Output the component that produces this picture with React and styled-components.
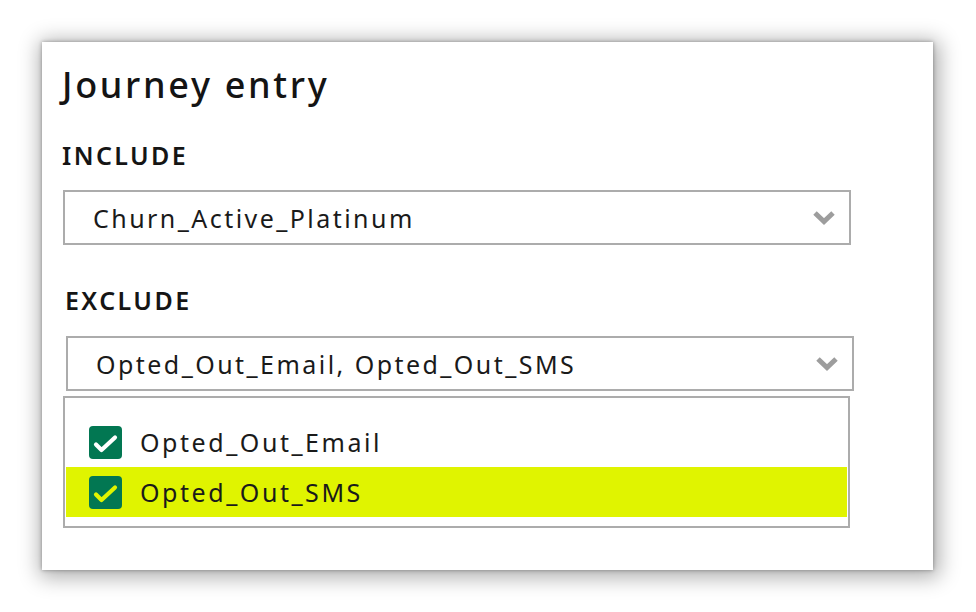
import React from "react";
import styled, { createGlobalStyle } from "styled-components";

const Global = createGlobalStyle`
  html, body { margin: 0; padding: 0; background: #ffffff; }
  body { font-family: "Noto Sans", "Liberation Sans", sans-serif; color: #111; }
`;

const Page = styled.div`
  padding: 42px 0 0 42px;
  width: 976px;
  height: 612px;
  box-sizing: border-box;
`;

const Card = styled.section`
  width: 891px;
  height: 528px;
  box-sizing: border-box;
  background: #fff;
  padding: 20px 0 0 20px;
  box-shadow: 0 0 4px rgba(0,0,0,0.35), 2px 3px 20px 4px rgba(0,0,0,0.33);
  display: flex;
  flex-direction: column;
`;

const Title = styled.h1`
  margin: 0;
  font-size: 36px;
  font-weight: 500;
  letter-spacing: 2.7px;
  line-height: 46px;
  color: #141414;
`;

const Section = styled.div`
  display: flex;
  flex-direction: column;
  margin-left: ${p => p.$shift || 0}px;
  margin-top: ${p => p.$top}px;
`;

const Label = styled.div`
  font-size: 25px;
  font-weight: 600;
  letter-spacing: 2.4px;
  line-height: 30px;
  color: #151515;
  margin-bottom: ${p => p.$gap}px;
`;

const Select = styled.div`
  width: 788px;
  height: ${p => p.$h}px;
  box-sizing: border-box;
  border: 2px solid #acacac;
  margin-left: 1px;
  display: flex;
  align-items: center;
  justify-content: space-between;
  padding: 0 13px 0 28px;
`;

const Value = styled.span`
  font-size: 25px;
  letter-spacing: 2.45px;
  color: #1a1a1a;
`;

const List = styled.div`
  width: 787px;
  box-sizing: border-box;
  margin-top: 5px;
  border: 2px solid #acacac;
  padding: 19px 1px 9px 1px;
  display: flex;
  flex-direction: column;
`;

const Option = styled.div`
  height: 50px;
  display: flex;
  align-items: center;
  gap: 18px;
  padding-left: 23px;
  background: ${p => (p.$active ? "#e0f400" : "transparent")};
`;

const Box = styled.span`
  width: 33px;
  height: 33px;
  border-radius: 4px;
  background: #027752;
  display: flex;
  align-items: center;
  justify-content: center;
  flex: none;
`;

const OptionText = styled.span`
  font-size: 25px;
  letter-spacing: 2.55px;
  color: #1a1a1a;
`;

const Chevron = () => (
  <svg width="24" height="16" viewBox="0 0 24 16">
    <path d="M3 3 L12 11.5 L21 3" fill="none" stroke="#9d9d9d" strokeWidth="5" strokeLinejoin="miter" />
  </svg>
);

const Check = ({ color }) => (
  <svg width="33" height="33" viewBox="0 0 33 33">
    <path d="M7 18.5 L12.5 24 L26 11.5" fill="none" stroke={color} strokeWidth="4.2" strokeLinecap="round" strokeLinejoin="round" />
  </svg>
);

const options = [
  { label: "Opted_Out_Email", active: false },
  { label: "Opted_Out_SMS", active: true },
];

export default function App() {
  return (
    <>
      <Global />
      <Page>
        <Card>
          <Title>Journey entry</Title>
          <Section $top={32}>
            <Label $gap={20}>INCLUDE</Label>
            <Select $h={55}>
              <Value>Churn_Active_Platinum</Value>
              <Chevron />
            </Select>
          </Section>
          <Section $top={40} $shift={3}>
            <Label $gap={21}>EXCLUDE</Label>
            <Select $h={55}>
              <Value>Opted_Out_Email, Opted_Out_SMS</Value>
              <Chevron />
            </Select>
          </Section>
          <Section $top={0} $shift={1}>
            <List>
              {options.map(o => (
                <Option key={o.label} $active={o.active}>
                  <Box>
                    <Check color={o.active ? "#e0f400" : "#ffffff"} />
                  </Box>
                  <OptionText>{o.label}</OptionText>
                </Option>
              ))}
            </List>
          </Section>
        </Card>
      </Page>
    </>
  );
}
